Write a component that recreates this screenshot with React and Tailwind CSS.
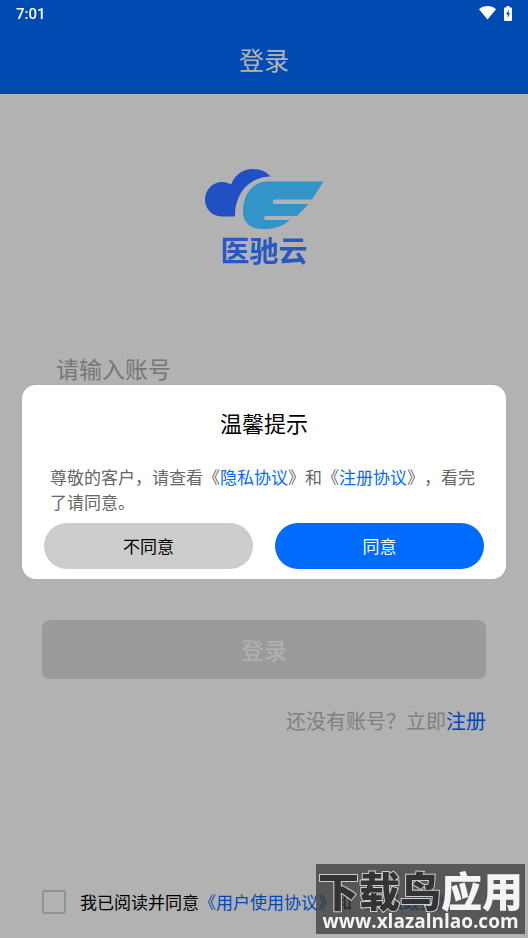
import React, { useState } from 'react';

const LINK = 'text-[#006bff]';

function StatusBar() {
  return (
    <div className="fixed inset-x-0 top-0 z-50 flex h-7 items-center justify-between px-4 text-white">
      <span className="font-[Roboto,sans-serif] text-[15px] font-medium">7:01</span>
      <div className="flex items-center gap-2 pb-0.5">
        <svg className="h-[14px] w-[17px]" viewBox="0 0 17 14" fill="currentColor">
          <path d="M0 3.2C2.4 1.1 5.3 0 8.5 0S14.6 1.1 17 3.2L8.5 13.6Z" />
        </svg>
        <svg className="h-[15px] w-2" viewBox="0 0 8 15" fill="none">
          <path d="M2.5 0h3v1.5H7.2q.8 0 .8.8V14.2q0 .8-.8.8H.8q-.8 0-.8-.8V2.3q0-.8.8-.8H2.5Z" fill="#fff" />
          <path d="M4.8 3.6 2 8.2h1.7V12L6 7.2H4.5Z" fill="#004bb2" />
        </svg>
      </div>
    </div>
  );
}

// stays above the dimmed backdrop
function Logo() {
  return (
    <div className="relative z-[45] flex flex-col items-center">
      <svg className="h-[62px] w-[120px]" viewBox="0 0 120 62">
        <path
          d="M31 48.5H19C8 48.5 1 41 1 31.5S8.5 14 18 14c3.5 0 6.5 1 9 2.5C31 6.5 39 1 49 1c8 0 14 3 17.5 7.5C46 9 31 24 31 48.5Z"
          fill="#214fc4"
        />
        <path
          d="M64 13.5H119.5L108 31.5H71a2.200 2.200 0 0 0 0 4.500H104.500L93 48H62a2 2 0 0 0 0 4H86C79 58 71 61 61 61H58C46 61 39 54 39 44C39 27 48 13.500 64 13.500Z"
          fill="#3294c8"
        />
      </svg>
      <span className="mt-0.5 text-[29px] font-bold leading-[34px] text-[#2a58c2]">医驰云</span>
    </div>
  );
}

function NoticeDialog({ onClose }) {
  return (
    <div className="fixed inset-0 z-40 flex items-center justify-center bg-black/30 px-[22px] pt-[26px]">
      <div role="dialog" aria-labelledby="notice-title" className="w-full rounded-[14px] bg-white px-[22px] pb-[10px] pt-[19px]">
        <h2 id="notice-title" className="text-center text-[22px] leading-9 text-black">
          温馨提示
        </h2>
        <p className="mt-6 px-[6px] text-[17px] leading-[25px] text-[#666]">
          尊敬的客户，请查看《
          <a href="#privacy" className={LINK}>隐私协议</a>
          》和《
          <a href="#register-terms" className={LINK}>注册协议</a>
          》，看完了请同意。
        </p>
        <div className="mt-[9px] flex gap-[22px]">
          <button onClick={onClose} className="h-[46px] flex-1 rounded-full bg-[#ccc] text-[17px] text-black">
            不同意
          </button>
          <button onClick={onClose} className="h-[46px] flex-1 rounded-full bg-[#006bff] text-[17px] text-white">
            同意
          </button>
        </div>
      </div>
    </div>
  );
}

function Watermark() {
  return (
    <div className="pointer-events-none fixed bottom-1 right-[3px] z-50 flex h-[70px] w-[209px] flex-col items-center bg-[#303030]/70 pt-1 text-[#f4f4f4]">
      <span className="whitespace-nowrap text-[41px] font-black leading-[42px]">
        <span className="text-[#333] [-webkit-text-stroke:2px_#ccc] [paint-order:stroke_fill]">下载鸟</span>
        应用
      </span>
      <span className="font-['Open_Sans',sans-serif] text-[19px] font-bold leading-[22px]">www.xlazalnlao.com</span>
    </div>
  );
}

export default function App() {
  const [open, setOpen] = useState(true);

  return (
    <div className="flex min-h-screen flex-col bg-white font-['Noto_Sans_CJK_SC',sans-serif] [text-spacing-trim:space-all]">
      <StatusBar />
      <header className="bg-[#006bff] pb-0.5 pt-[26px]">
        <h1 className="text-center text-[25px] leading-[66px] text-white">登录</h1>
      </header>

      <main className="flex flex-1 flex-col px-[42px] pt-[74px]">
        <Logo />
        <form className="mt-[72px] flex flex-col" onSubmit={(e) => e.preventDefault()}>
          <input
            type="text"
            aria-label="账号"
            placeholder="请输入账号"
            className="h-[60px] px-[14px] text-[23px] outline-none placeholder:text-[#aaa]"
          />
          <input
            type="password"
            aria-label="密码"
            placeholder="请输入密码"
            className="mt-6 h-[60px] px-[14px] text-[23px] outline-none placeholder:text-[#aaa]"
          />
          <button type="submit" className="mt-[138px] h-[59px] rounded-lg bg-[#ddd] text-[23px] text-white">
            登录
          </button>
        </form>
        <p className="mt-7 text-right text-xl leading-7 text-[#b8b8b8]">
          还没有账号？立即
          <a href="#register" className={LINK}>注册</a>
        </p>

        <label className="mb-6 mt-auto flex items-center whitespace-nowrap text-[17px] leading-6 text-black">
          <input
            type="checkbox"
            className="mr-[14px] size-6 shrink-0 appearance-none rounded-[3px] border-2 border-[#d2d2d2]"
          />
          我已阅读并同意
          <a href="#terms" className={LINK}>《用户使用协议》</a>
          和
          <a href="#policy" className={LINK}>《隐私政策》</a>
        </label>
      </main>

      {open && <NoticeDialog onClose={() => setOpen(false)} />}
      <Watermark />
    </div>
  );
}
